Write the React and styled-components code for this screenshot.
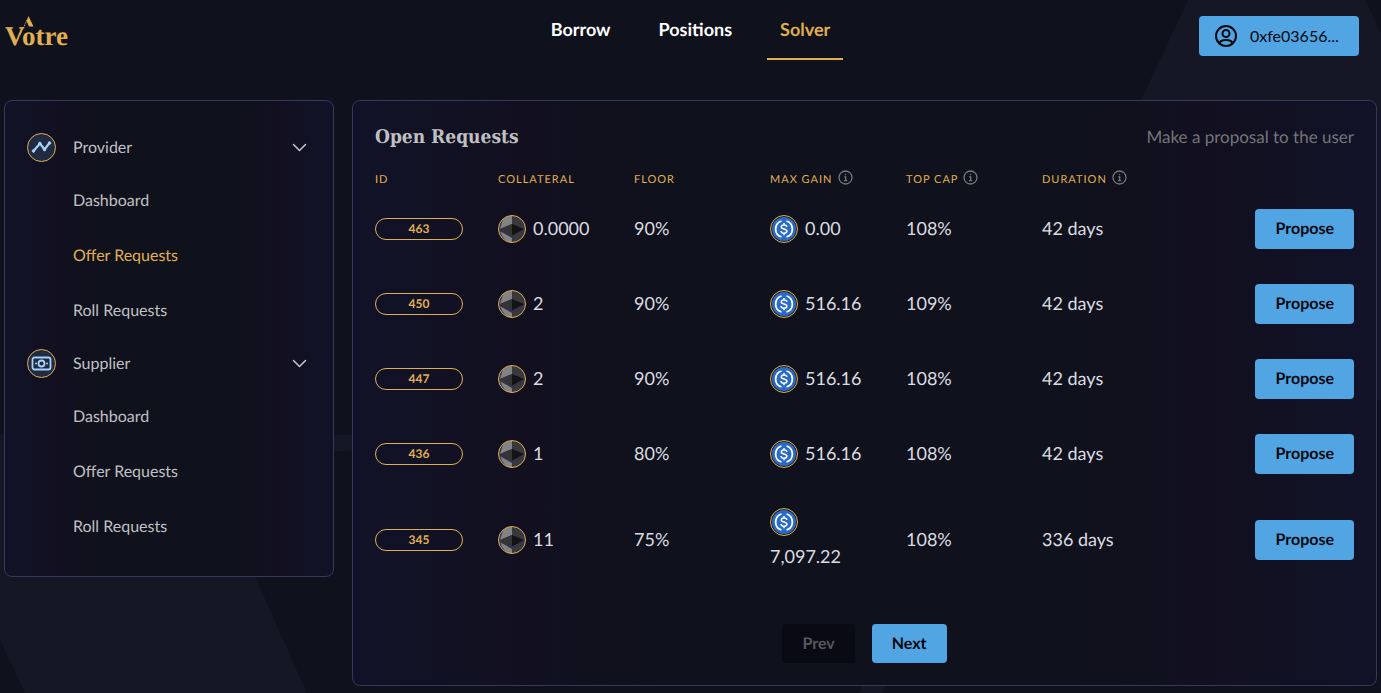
import React from "react";
import styled, { createGlobalStyle } from "styled-components";

const GlobalStyle = createGlobalStyle`
  *, *::before, *::after { box-sizing: border-box; }
  body {
    margin: 0;
    background: #0f111c;
    color: #dcdce0;
    font-family: Lato, "Liberation Sans", sans-serif;
    font-size: 18px;
    text-rendering: geometricPrecision;
  }
  button { text-rendering: inherit; }
`;

const gold = "#e0af52";
const blue = "#51a5e3";

const Page = styled.div`
  position: relative;
  min-height: 100vh;
  overflow: hidden;
`;

const Backdrop = styled.svg`
  position: absolute;
  inset: 0;
  width: 100%;
  height: 100%;
  z-index: -1;
  fill: #151724;
`;

const Header = styled.header`
  display: grid;
  grid-template-columns: 1fr auto 1fr;
  align-items: start;
  height: 100px;
`;

const LogoLink = styled.a`
  display: block;
  width: 76px;
  padding-top: 10px;
  svg { display: block; }
`;

const Nav = styled.nav`
  display: flex;
  gap: 22px;
`;

const NavLink = styled.a`
  height: 60px;
  padding: 0 13px;
  border-bottom: 2px solid ${(p) => (p.$active ? gold : "transparent")};
  color: ${(p) => (p.$active ? gold : "#fff")};
  font-weight: 700;
  line-height: 58px;
  text-decoration: none;
`;

const Button = styled.button`
  height: ${(p) => (p.$small ? 39 : 40)}px;
  padding: 0 20px;
  border: 0;
  border-radius: 4px;
  background: ${blue};
  color: #06080f;
  font: 700 16px/24px Lato, sans-serif;
  cursor: pointer;
  &:disabled {
    background: #090a13;
    color: #58585c;
    cursor: default;
  }
`;

const Wallet = styled(Button)`
  display: flex;
  align-items: center;
  justify-self: end;
  gap: 12px;
  width: 160px;
  margin: 16px 22px 0 0;
  padding: 0 15px;
  font-weight: 400;
  text-rendering: auto;
`;

const Main = styled.main`
  display: grid;
  grid-template-columns: 330px minmax(0, 1fr);
  align-items: start;
  gap: 18px;
  padding: 0 4px 7px;
`;

const Panel = styled.section`
  padding: 21px 22px 22px;
  border: 1px solid #34385a;
  border-radius: 8px;
  background: linear-gradient(90deg, #111228 0%, #12101f 17%, #0f111c 30%, #0f111c 70%, #12101f 83%, #111228 100%);
`;

const GroupHead = styled.button`
  display: flex;
  align-items: center;
  width: 100%;
  height: 51px;
  padding: 0 4px 0 0;
  border: 0;
  background: none;
  color: #c0c0c3;
  font: 400 16px/24px Lato, sans-serif;
  text-align: left;
  cursor: pointer;
  span { flex: 1; margin-left: 17px; }
  svg { display: block; }
`;

const Links = styled.ul`
  margin: 0;
  padding: 0 0 0 46px;
  list-style: none;
`;

const SideLink = styled.a`
  display: block;
  color: ${(p) => (p.$active ? gold : "#c0c0c3")};
  font-size: 16px;
  line-height: 55px;
  text-decoration: none;
`;

const Heading = styled.div`
  display: flex;
  align-items: baseline;
  justify-content: space-between;
  height: 28px;
`;

const Title = styled.h1`
  margin: 0;
  color: #c0c0c3;
  font: 700 19px/28px "DejaVu Serif Condensed", "DejaVu Serif", serif;
`;

const Hint = styled.p`
  margin: 0;
  color: #747477;
  font-size: 17px;
  line-height: 30px;
`;

const Table = styled.table`
  width: 100%;
  margin-top: 14px;
  border-collapse: collapse;
  table-layout: fixed;
`;

const Th = styled.th`
  width: ${(p) => p.$width || "auto"};
  height: 28px;
  padding: 2px 0 0;
  color: ${gold};
  font-size: 11px;
  font-weight: 400;
  letter-spacing: 1px;
  text-align: left;
  text-transform: uppercase;
  white-space: nowrap;
`;

const ThInner = styled.span`
  display: flex;
  align-items: center;
  gap: 5px;
  height: 20px;
  svg { margin-bottom: 3px; }
`;

const Td = styled.td`
  height: 75px;
  padding: ${(p) => (p.$action ? "0 0 2px" : "12px 36px 15px 0")};
  text-align: ${(p) => (p.$action ? "right" : "left")};
  vertical-align: middle;
`;

const Amount = styled.span`
  display: flex;
  flex-wrap: wrap;
  align-items: center;
  column-gap: 7px;
  line-height: 35px;
  margin-right: -12px;
  padding-right: ${(p) => (p.$narrow ? 12 : 0)}px;
  svg { display: block; margin: 4px 0 3px; }
`;

const Pill = styled.a`
  display: block;
  width: 88px;
  margin-top: 2px;
  border: 1px solid ${gold};
  border-radius: 11px;
  color: ${gold};
  font-size: 12px;
  font-weight: 700;
  line-height: 20px;
  text-align: center;
  text-decoration: none;
`;

const Pager = styled.nav`
  display: flex;
  justify-content: center;
  gap: 17px;
  margin-top: 35px;
`;

const Logo = () => (
  <svg width="76" height="42" viewBox="0 0 76 42" role="img" aria-label="Votre">
    <text x="5" y="35" fill={gold} fontFamily="Liberation Serif, serif" fontWeight="700" fontSize="27">Votre</text>
    <path d="M28.500 6 L33.500 16.500 H29 L26.500 11 Z" fill={gold} />
    <path d="M27 10 L20 25" stroke={gold} strokeWidth="1" strokeDasharray="1.500 1" />
  </svg>
);

const UserIcon = () => (
  <svg width="24" height="24" viewBox="0 0 24 24" fill="none" stroke="#06080f" strokeWidth="2" aria-hidden="true">
    <circle cx="12" cy="12" r="10" />
    <circle cx="12" cy="9.500" r="3.500" />
    <path d="M5.500 19.300c.5-2.200 2.500-3.300 6.500-3.300s6 1.100 6.500 3.300" />
  </svg>
);

const Chevron = () => (
  <svg width="15" height="9" viewBox="0 0 15 9" fill="none" stroke="#c8c8ca" strokeWidth="1.500" strokeLinecap="round" strokeLinejoin="round" aria-hidden="true">
    <path d="M1.500 1.500 7.500 7.500 13.500 1.500" />
  </svg>
);

const ProviderIcon = () => (
  <svg width="29" height="29" viewBox="0 0 29 29" aria-hidden="true">
    <circle cx="14.500" cy="14.500" r="14" fill="#202b41" stroke={gold} />
    <g fill="#a5d3f7" stroke="#a5d3f7">
      <path d="M6.500 18 13 10.500 17.500 16.500 22.500 10" fill="none" strokeWidth="2.200" />
      <circle cx="6.500" cy="18" r="1.300" />
      <circle cx="12.800" cy="10.500" r="1.300" />
      <circle cx="17.500" cy="16.500" r="1.300" />
      <circle cx="22.500" cy="10" r="1.300" />
    </g>
  </svg>
);

const SupplierIcon = () => (
  <svg width="29" height="29" viewBox="0 0 29 29" aria-hidden="true">
    <circle cx="14.500" cy="14.500" r="14" fill="#202b41" stroke={gold} />
    <g fill="none" stroke="#a5d3f7" strokeWidth="1.800">
      <rect x="5.500" y="8.500" width="18" height="12" rx="2" />
      <circle cx="14.500" cy="14.500" r="3" />
    </g>
    <circle cx="9" cy="14.500" r="1" fill="#a5d3f7" />
    <circle cx="20" cy="14.500" r="1" fill="#a5d3f7" />
  </svg>
);

const InfoIcon = () => (
  <svg width="15" height="15" viewBox="0 0 15 15" fill="none" stroke="#77777b" strokeWidth="1.300" aria-hidden="true">
    <circle cx="7.500" cy="7.500" r="6.500" />
    <path d="M6.200 6.800h1.500v3.700M6 10.700h3.200" />
    <circle cx="7.500" cy="4.600" r=".5" fill="#77777b" strokeWidth=".5" />
  </svg>
);

const EthIcon = () => (
  <svg width="28" height="28" viewBox="0 0 28 28" role="img" aria-label="ETH">
    <circle cx="14" cy="14" r="13.500" fill="#34334a" />
    <path d="M14 .5V9L2 14L5 4.500L8 2.200Z" fill="#828384" />
    <path d="M14 .5V9l12 5L23 4.500L20 2Z" fill="#38393b" />
    <path d="M14 9v11.500L2 14Z" fill="#343434" />
    <path d="M14 9v11.500l12-6.500Z" fill="#141414" />
    <path d="M2.500 16.500 14 23V27.500C9 27.500 4 23 2.500 16.500Z" fill="#828384" />
    <path d="M25.500 16.500 14 23V27.500C19 27.500 24 23 25.500 16.500Z" fill="#38393b" />
    <circle cx="14" cy="14" r="13.500" fill="none" stroke={gold} />
  </svg>
);

const UsdcIcon = () => (
  <svg width="28" height="28" viewBox="0 0 28 28" role="img" aria-label="USDC">
    <circle cx="14" cy="14" r="13.500" fill="#1a1c2a" stroke={gold} />
    <circle cx="14" cy="14" r="12" fill="#2a6bc4" />
    <g fill="none" stroke="#fff" strokeWidth="1.700">
      <path d="M11.500 6A8.400 8.400 0 0 0 11.500 22M16.500 6A8.400 8.400 0 0 1 16.500 22" />
      <path d="M16.900 11.800c-.2-1.300-1.200-1.900-2.900-1.900s-2.700.8-2.700 2c0 2.800 5.600 1.300 5.600 4.200 0 1.300-1.100 2.100-2.900 2.100s-2.900-.8-3.100-2.200M14 8v2M14 18v2.200" strokeWidth="1.500" />
    </g>
  </svg>
);

const groups = [
  { name: "Provider", Icon: ProviderIcon, active: "Offer Requests" },
  { name: "Supplier", Icon: SupplierIcon },
];
const links = ["Dashboard", "Offer Requests", "Roll Requests"];

const columns = [
  { label: "ID", width: "123px" },
  { label: "Collateral", width: "136px" },
  { label: "Floor", width: "136px" },
  { label: "Max gain", width: "136px", info: true },
  { label: "Top cap", width: "136px", info: true },
  { label: "Duration", width: "136px", info: true },
];

const requests = [
  { id: 463, collateral: "0.0000", floor: "90%", gain: "0.00", cap: "108%", duration: "42 days" },
  { id: 450, collateral: "2", floor: "90%", gain: "516.16", cap: "109%", duration: "42 days" },
  { id: 447, collateral: "2", floor: "90%", gain: "516.16", cap: "108%", duration: "42 days" },
  { id: 436, collateral: "1", floor: "80%", gain: "516.16", cap: "108%", duration: "42 days" },
  { id: 345, collateral: "11", floor: "75%", gain: "7,097.22", cap: "108%", duration: "336 days" },
];

export default function App() {
  return (
    <Page>
      <GlobalStyle />
      <Backdrop viewBox="0 0 1381 693" preserveAspectRatio="none" aria-hidden="true">
        <path d="M1188 0H1365L1381 33V400H1000Z" />
        <path d="M0 435H420V444L334 452L200 452L307 693H25L0 640Z" />
        <path d="M862 686H886L882 693H858Z" />
      </Backdrop>
      <Header>
        <LogoLink href="#home"><Logo /></LogoLink>
        <Nav aria-label="Main">
          <NavLink href="#borrow">Borrow</NavLink>
          <NavLink href="#positions">Positions</NavLink>
          <NavLink href="#solver" $active aria-current="page">Solver</NavLink>
        </Nav>
        <Wallet type="button"><UserIcon />0xfe03656...</Wallet>
      </Header>
      <Main>
        <Panel as="aside">
          {groups.map(({ name, Icon, active }) => (
            <div key={name}>
              <GroupHead type="button" aria-expanded="true">
                <Icon /><span>{name}</span><Chevron />
              </GroupHead>
              <Links>
                {links.map((link) => (
                  <li key={link}>
                    <SideLink href="#solver" $active={link === active}>{link}</SideLink>
                  </li>
                ))}
              </Links>
            </div>
          ))}
        </Panel>
        <Panel>
          <Heading>
            <Title>Open Requests</Title>
            <Hint>Make a proposal to the user</Hint>
          </Heading>
          <Table>
            <thead>
              <tr>
                {columns.map((c) => (
                  <Th key={c.label} $width={c.width} scope="col">
                    <ThInner>{c.label}{c.info && <InfoIcon />}</ThInner>
                  </Th>
                ))}
                <Th as="td" />
              </tr>
            </thead>
            <tbody>
              {requests.map((r) => (
                <tr key={r.id}>
                  <Td><Pill href="#request">{r.id}</Pill></Td>
                  <Td><Amount><EthIcon />{r.collateral}</Amount></Td>
                  <Td>{r.floor}</Td>
                  <Td><Amount $narrow><UsdcIcon />{r.gain}</Amount></Td>
                  <Td>{r.cap}</Td>
                  <Td>{r.duration}</Td>
                  <Td $action><Button type="button">Propose</Button></Td>
                </tr>
              ))}
            </tbody>
          </Table>
          <Pager aria-label="Pages">
            <Button type="button" $small disabled>Prev</Button>
            <Button type="button" $small>Next</Button>
          </Pager>
        </Panel>
      </Main>
    </Page>
  );
}
